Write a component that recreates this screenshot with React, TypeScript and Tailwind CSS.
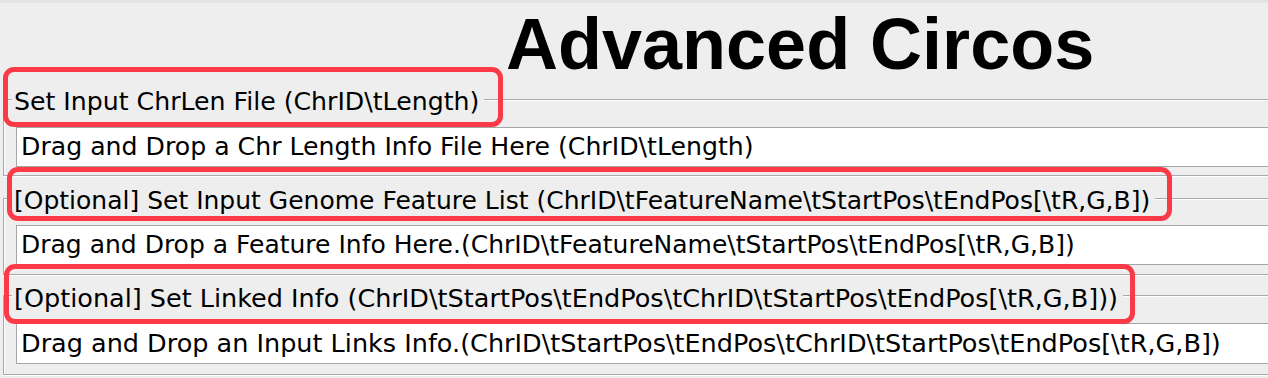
import React from 'react';

interface Section {
  title: string;
  hint: string;
  top: string;
  gap: string;
  field: string;
  bottom: string;
  size: string;
}

const sections: Section[] = [
  {
    title: 'Set Input ChrLen File (ChrID\\tLength)',
    hint: 'Drag and Drop a Chr Length Info File Here (ChrID\\tLength)',
    top: '',
    gap: 'mt-[14px]',
    field: 'h-[40px]',
    bottom: 'pb-[8px]',
    size: 'text-[25.2px]',
  },
  {
    title: '[Optional] Set Input Genome Feature List (ChrID\\tFeatureName\\tStartPos\\tEndPos[\\tR,G,B])',
    hint: 'Drag and Drop a Feature Info Here.(ChrID\\tFeatureName\\tStartPos\\tEndPos[\\tR,G,B])',
    top: 'mt-[8px]',
    gap: 'mt-[13px]',
    field: 'h-[40px]',
    bottom: 'pb-[9px]',
    size: 'text-[25px]',
  },
  {
    title: '[Optional] Set Linked Info (ChrID\\tStartPos\\tEndPos\\tChrID\\tStartPos\\tEndPos[\\tR,G,B]))',
    hint: 'Drag and Drop an Input Links Info.(ChrID\\tStartPos\\tEndPos\\tChrID\\tStartPos\\tEndPos[\\tR,G,B])',
    top: 'mt-[6px]',
    gap: 'mt-[14px]',
    field: 'h-[41px]',
    bottom: 'pb-[10px]',
    size: 'text-[25.5px]',
  },
];

// red annotation boxes drawn over the screenshot
const marks = [
  'left-[3px] top-[67px] w-[500px] h-[60px]',
  'left-[7px] top-[167px] w-[1165px] h-[54px]',
  'left-[4px] top-[264px] w-[1131px] h-[60px]',
];

export default function App() {
  return (
    <div className="relative h-[378px] w-[1268px] overflow-hidden bg-[#eeeeee] text-black [font-family:'DejaVu_Sans',sans-serif]">
      <div className="h-[3px] bg-[#e4e4e4]" />
      <div className="h-[82px] pt-[5px] pl-[506px] text-[72px] font-bold leading-none [font-family:'Liberation_Sans',Arial,sans-serif]">
        Advanced Circos
      </div>

      {sections.map((s, i) => (
        <fieldset
          key={i}
          className={`ml-[3px] mr-[-20px] border border-[#a9a9a9] pl-[12px] shadow-[inset_1px_1px_0_#fff,0_1px_0_#fff] ${s.top} ${s.bottom} ${s.size}`}
        >
          <legend className="-ml-[4px] bg-[#eeeeee] pl-[2px] pr-[5px] leading-[28px]">
            <span className="relative top-[3px]">{s.title}</span>
          </legend>
          <div className={`${s.gap} ${s.field} flex items-center border border-[#a6a6a6] bg-white pl-[4px]`}>
            {s.hint}
          </div>
        </fieldset>
      ))}

      {marks.map((m, i) => (
        <div
          key={i}
          className={`pointer-events-none absolute rounded-[11px] border-[5px] border-[#fc3a47] ${m}`}
        />
      ))}
    </div>
  );
}
